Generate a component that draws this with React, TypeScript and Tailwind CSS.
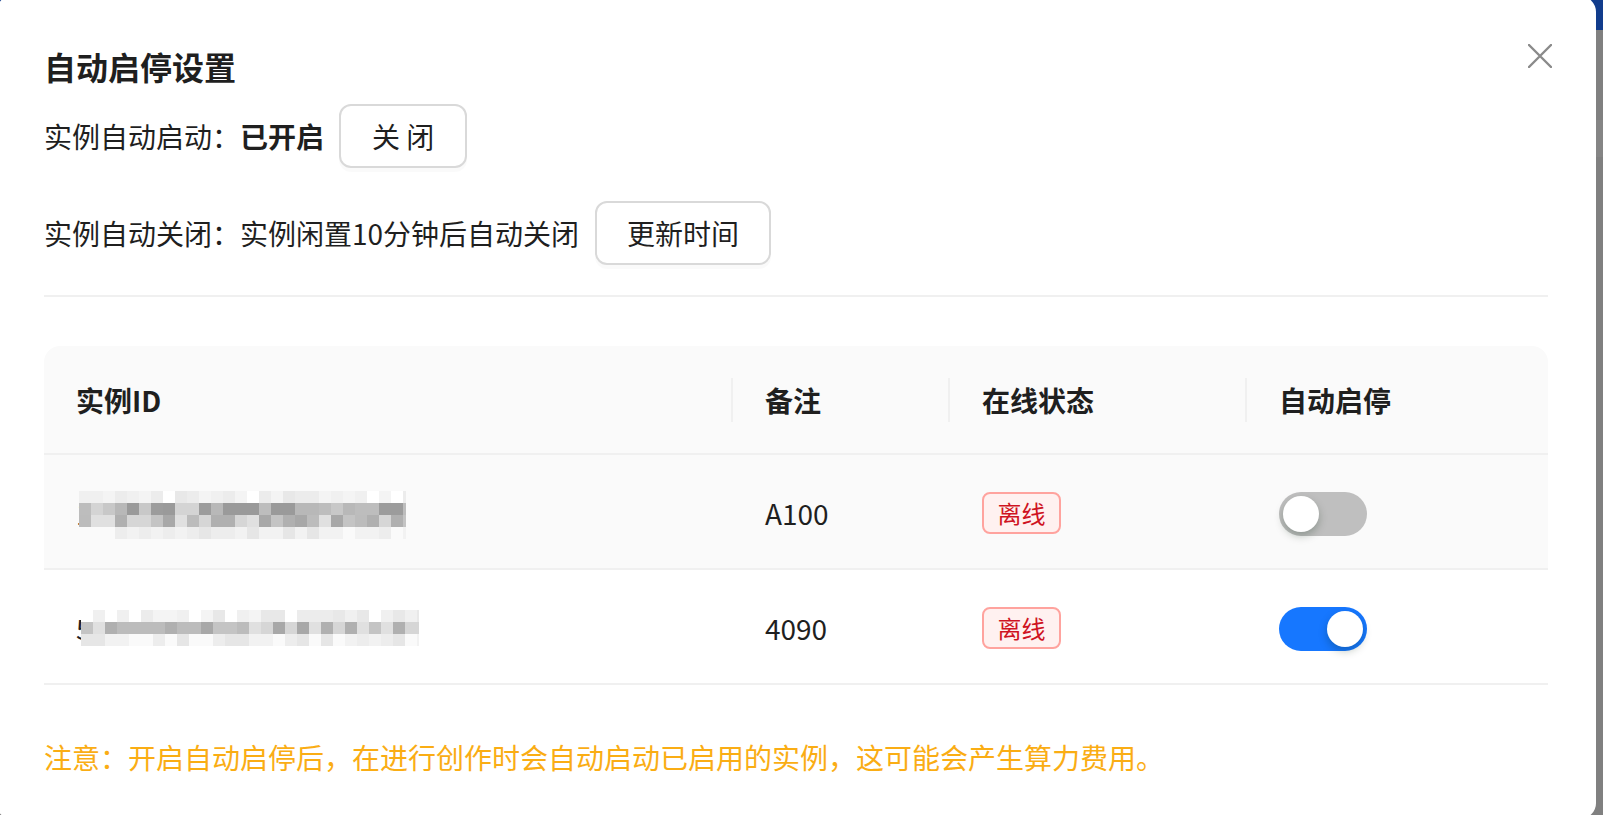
import React from "react";

const FONT = { fontFamily: '"Noto Sans CJK SC", "Noto Sans", sans-serif' };

function seeded(seed: number) {
  let s = seed;
  return () => {
    s = (s * 9301 + 49297) % 233280;
    return s / 233280;
  };
}

const PALETTES = [
  ["#f4f4f4", "#ececec", "#ffffff", "#e8e8e8", "#f0f0f0"],
  ["#c8c8c8", "#b8b8b8", "#9a9a9a", "#d4d4d4", "#bdbdbd", "#9c9c9c"],
  ["#c4c4c4", "#d6d6d6", "#a8a8a8", "#e0e0e0", "#bcbcbc", "#b0b0b0"],
  ["#f2f2f2", "#e6e6e6", "#fafafa", "#ededed"],
];

function Mosaic({ width, rows, cell, seed }: { width: number; rows: number[]; cell: number; seed: number }) {
  const rnd = seeded(seed);
  const cols = Math.ceil(width / cell);
  const h = rows.length * cell;
  const rects: React.ReactNode[] = [];
  rows.forEach((p, r) => {
    for (let c = 0; c < cols; c++) {
      const pal = PALETTES[p];
      const col = pal[Math.floor(rnd() * pal.length)];
      rects.push(<rect key={r + "-" + c} x={c * cell} y={r * cell} width={cell} height={cell} fill={col} />);
    }
  });
  return (
    <svg width={width} height={h} viewBox={`0 0 ${width} ${h}`} shapeRendering="crispEdges">
      {rects}
    </svg>
  );
}

function Switch({ on }: { on: boolean }) {
  return (
    <div
      className={
        "mt-[4px] w-[88px] h-[44px] rounded-full flex items-center px-[4px] " +
        (on ? "bg-[#1677ff] justify-end" : "bg-[#bfbfbf] justify-start")
      }
    >
      <div className="w-[36px] h-[36px] rounded-full bg-white shadow-[0_4px_8px_0_rgba(0,35,11,0.25)]" />
    </div>
  );
}

function Tag() {
  return (
    <div className="mt-[3px] w-[79px] h-[42px] border-2 border-[#ffa39e] bg-[#fff1f0] rounded-[8px] text-[#cf1322] text-[24px] leading-[38px] flex items-center justify-center">
      离线
    </div>
  );
}

function Btn({ children, w }: { children: React.ReactNode; w: string }) {
  return (
    <div
      className={
        "h-[64px] border-2 border-[#d9d9d9] rounded-[12px] bg-white flex items-center justify-center text-[28px] text-[#1f1f1f] shadow-[0_4px_0_rgba(0,0,0,0.02)] " +
        w
      }
    >
      {children}
    </div>
  );
}

const GRID = "grid grid-cols-[689px_217px_297px_301px]";

function Row({
  lead,
  mosaicW,
  mosaicRows,
  mosaicSeed,
  mosaicLeft,
  mosaicTop,
  note,
  on,
  hover,
}: {
  lead: string;
  mosaicW: number;
  mosaicRows: number[];
  mosaicSeed: number;
  mosaicLeft: string;
  mosaicTop: string;
  note: string;
  on: boolean;
  hover: boolean;
}) {
  return (
    <div className={GRID + " h-[115px] border-b-2 border-[#f0f0f0] " + (hover ? "bg-[#fafafa]" : "bg-white")}>
      <div className="px-[32px] flex items-center">
        <div className="relative mt-[2px] text-[28px] text-[#1f1f1f] leading-[40px]">
          <span>{lead}</span>
          <div className={"absolute " + mosaicLeft + " " + mosaicTop}>
            <Mosaic width={mosaicW} rows={mosaicRows} cell={12} seed={mosaicSeed} />
          </div>
        </div>
      </div>
      <div className="px-[32px] pt-[2px] flex items-center text-[28px] text-[#1f1f1f]">{note}</div>
      <div className="px-[32px] flex items-center">
        <Tag />
      </div>
      <div className="px-[32px] flex items-center">
        <Switch on={on} />
      </div>
    </div>
  );
}

export default function App() {
  return (
    <div className="w-[1603px] h-[815px] overflow-hidden bg-[#808080] relative" style={FONT}>
      <div className="h-[30px] bg-[#113c8c]" />
      <div className="h-[90px]" />
      <div className="h-[37px] bg-[#858585]" />

      <div className="absolute left-[-4px] top-[-4px] w-[1600px] h-[823px] bg-white rounded-[16px] px-[48px] pt-[46px]">
        <button className="absolute right-[44px] top-[48px] w-[24px] h-[24px]">
          <svg width="24" height="24" viewBox="0 0 24 24">
            <path d="M1 1 L23 23 M23 1 L1 23" stroke="#8a8a8a" strokeWidth="2.4" strokeLinecap="round" />
          </svg>
        </button>

        <div className="text-[32px] leading-[48px] font-bold text-[#1f1f1f]">自动启停设置</div>

        <div className="mt-[14px] flex items-center h-[64px] text-[28px] text-[#1f1f1f]">
          <span>实例自动启动：</span>
          <span className="font-bold">已开启</span>
          <div className="ml-[15px]">
            <Btn w="w-[128px]">关 闭</Btn>
          </div>
        </div>

        <div className="mt-[33px] flex items-center h-[64px] text-[28px] text-[#1f1f1f]">
          <span>实例自动关闭：实例闲置10分钟后自动关闭</span>
          <div className="ml-[16px]">
            <Btn w="w-[176px]">更新时间</Btn>
          </div>
        </div>

        <div className="mt-[30px] h-[2px] bg-[#f0f0f0]" />

        <div className="mt-[49px]">
          <div className={GRID + " h-[109px] bg-[#fafafa] rounded-t-[16px] border-b-2 border-[#f0f0f0]"}>
            {["实例ID", "备注", "在线状态", "自动启停"].map((t, i) => (
              <div key={t} className="relative px-[32px] flex items-center text-[28px] font-bold text-[#1f1f1f]">
                {t}
                {i < 3 && (
                  <div className="absolute right-0 top-1/2 -translate-y-1/2 w-[2px] h-[44px] bg-[#f0f0f0]" />
                )}
              </div>
            ))}
          </div>
          <Row
            lead="1"
            mosaicW={327}
            mosaicRows={[0, 1, 2, 3]}
            mosaicSeed={17}
            mosaicLeft="left-[3px]"
            mosaicTop="top-[-2px]"
            note="A100"
            on={false}
            hover={true}
          />
          <Row
            lead="5"
            mosaicW={338}
            mosaicRows={[0, 2, 3]}
            mosaicSeed={5}
            mosaicLeft="left-[5px]"
            mosaicTop="top-[2px]"
            note="4090"
            on={true}
            hover={false}
          />
        </div>

        <div className="mt-[50px] text-[28px] leading-[44px] text-[#faad14]">
          注意：开启自动启停后，在进行创作时会自动启动已启用的实例，这可能会产生算力费用。
        </div>
      </div>
    </div>
  );
}
